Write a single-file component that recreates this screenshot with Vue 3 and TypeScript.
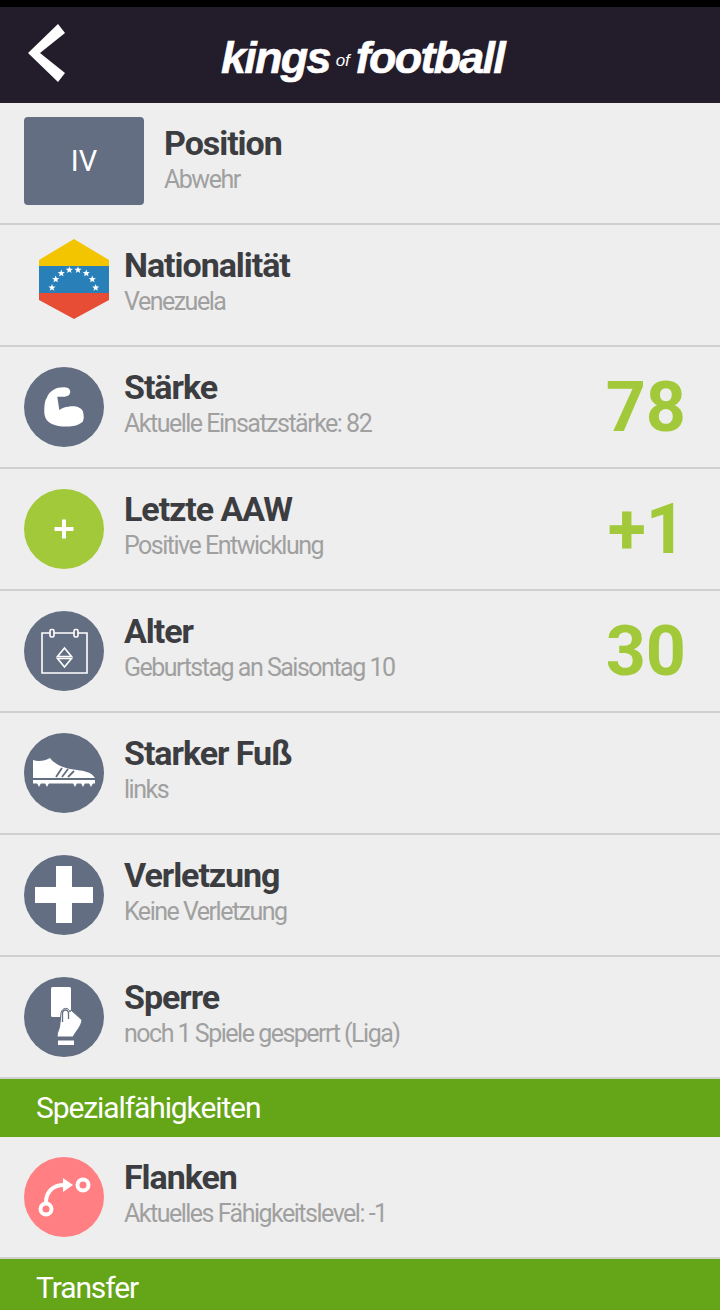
<script setup lang="ts">
type Row = {
  icon: string;
  title: string;
  sub: string;
  value?: string;
};

const rows: Row[] = [
  { icon: 'arm', title: 'Stärke', sub: 'Aktuelle Einsatzstärke: 82', value: '78' },
  { icon: 'plus', title: 'Letzte AAW', sub: 'Positive Entwicklung', value: '+1' },
  { icon: 'calendar', title: 'Alter', sub: 'Geburtstag an Saisontag 10', value: '30' },
  { icon: 'shoe', title: 'Starker Fuß', sub: 'links' },
  { icon: 'cross', title: 'Verletzung', sub: 'Keine Verletzung' },
  { icon: 'card', title: 'Sperre', sub: 'noch 1 Spiele gesperrt (Liga)' },
];

// five pointed star around a center, for the flag arc
function star(cx: number, cy: number, r: number) {
  const pts: string[] = [];
  for (let i = 0; i < 10; i++) {
    const rad = i % 2 === 0 ? r : r * 0.42;
    const a = -Math.PI / 2 + (i * Math.PI) / 5;
    pts.push(`${(cx + rad * Math.cos(a)).toFixed(2)},${(cy + rad * Math.sin(a)).toFixed(2)}`);
  }
  return pts.join(' ');
}

const flagStars = [
  [13, 48.7],
  [16.7, 40.3],
  [22.3, 34.3],
  [30.3, 31],
  [39, 31],
  [47.3, 34.3],
  [53.3, 40.3],
  [56.7, 48.7],
].map(([x, y]) => star(x, y, 3.8));
</script>

<template>
  <div class="page">
    <div class="statusbar"></div>
    <header class="topbar">
      <svg class="back" width="38" height="58" viewBox="0 0 38 58">
        <polygon points="0,29 30,0 37,9 12,29 37,49 30,58" fill="#fff" />
      </svg>
      <div class="logo">
        <span>kings</span>
        <span class="of">of</span>
        <span>football</span>
      </div>
    </header>

    <div class="row">
      <div class="posbox">IV</div>
      <div class="text">
        <div class="title">Position</div>
        <div class="sub">Abwehr</div>
      </div>
    </div>

    <div class="row">
      <svg class="flag" width="70" height="80" viewBox="0 0 70 80">
        <polygon points="35,0 70,21 70,27 0,27 0,21" fill="#f2c500" />
        <rect x="0" y="27" width="70" height="27" fill="#2980b9" />
        <polygon points="0,54 70,54 70,61 35,80 0,61" fill="#e74c35" />
        <polygon v-for="(s, i) in flagStars" :key="i" :points="s" fill="#fff" />
      </svg>
      <div class="text">
        <div class="title">Nationalität</div>
        <div class="sub">Venezuela</div>
      </div>
    </div>

    <div v-for="row in rows" :key="row.title" class="row">
      <svg class="icon" width="80" height="80" viewBox="0 0 80 80">
        <circle cx="40" cy="40" r="40" :fill="row.icon === 'plus' ? '#a2c93a' : '#636e82'" />
        <path
          v-if="row.icon === 'arm'"
          d="M20.3 44.7C20.3 38 21 33 22.7 31C24 27 27 24 30 22.5C34 20 41 19.5 44.3 21.3C47 23 47 27 44 28.7C41 30 37 30 33.3 29.7L35.3 43C38 41 41 39.7 44.3 39.7C48 39 52 39 54.3 40.3C58 42 59.3 44 59.3 46.3C60 50 60 52 58.7 54.7C56 57 53 58.5 49.3 59C44 59.8 39 59.8 34.3 59C29 58 25 56 22.7 53C21 50 20.3 48 20.3 44.7Z"
          fill="#fff"
        />
        <path v-if="row.icon === 'plus'" d="M40 30.5V49.5M30.5 40H49.5" stroke="#fff" stroke-width="4" fill="none" />
        <g v-if="row.icon === 'calendar'" fill="none" stroke="#fff" stroke-width="1.6">
          <path d="M18 22H63V62H18Z" />
          <rect x="26" y="18.5" width="4" height="7.5" rx="1.5" fill="#636e82" />
          <rect x="50" y="18.5" width="4" height="7.5" rx="1.5" fill="#636e82" />
          <path d="M40.5 37L47.5 45.5H33.5ZM33.5 47.5H47.5L40.5 56Z" />
        </g>
        <g v-if="row.icon === 'shoe'" fill="#fff">
          <path d="M9 27C14 29 21 28 26 25C30 31 41 36 53 37C61 38 67 39 71 45H9Z" />
          <rect x="9" y="47" width="62" height="3.5" />
          <path d="M13 50H17L15 54ZM21 50H25L23 54ZM49 50H53L51 54ZM57 50H61L59 54ZM65 50H69L67 54Z" />
          <path d="M32 44L38 35M38 44L44 36M44 44L50 38" stroke="#636e82" stroke-width="1.8" />
        </g>
        <path v-if="row.icon === 'cross'" d="M32 11H48V32H69V48H48V68H32V48H11V32H32Z" fill="#fff" />
        <g v-if="row.icon === 'card'">
          <rect x="27" y="10" width="20" height="30" rx="1.5" fill="#fff" />
          <path
            d="M36 46L37 36C38 30 45 30 46 35L47 33L58 43C57 50 52 54 49 60H33C33 54 36 52 36 46Z"
            fill="#fff"
            stroke="#636e82"
            stroke-width="1"
          />
          <path d="M38.5 45V36C39 32 44 32 44.5 36V42" fill="none" stroke="#636e82" stroke-width="1.3" />
          <rect x="34" y="63.5" width="16" height="4.5" fill="#fff" />
        </g>
      </svg>
      <div class="text">
        <div class="title">{{ row.title }}</div>
        <div class="sub">{{ row.sub }}</div>
      </div>
      <div v-if="row.value" class="value">{{ row.value }}</div>
    </div>

    <div class="section">Spezialfähigkeiten</div>

    <div class="row">
      <svg class="icon" width="80" height="80" viewBox="0 0 80 80">
        <circle cx="40" cy="40" r="40" fill="#ff7f82" />
        <circle cx="22" cy="52" r="5.5" fill="none" stroke="#fff" stroke-width="4" />
        <circle cx="59" cy="28" r="5.5" fill="none" stroke="#fff" stroke-width="4" />
        <path d="M22 45C22 35 29 28 40 28" fill="none" stroke="#fff" stroke-width="4" />
        <polygon points="39,21 49,28 39,35" fill="#fff" />
      </svg>
      <div class="text">
        <div class="title">Flanken</div>
        <div class="sub">Aktuelles Fähigkeitslevel: -1</div>
      </div>
    </div>

    <div class="section">Transfer</div>
  </div>
</template>

<style>
html,
body {
  margin: 0;
  background: #eeeeee;
}
</style>

<style scoped>
.page {
  width: 720px;
  height: 1310px;
  overflow: hidden;
  background: #eeeeee;
  font-family: Roboto, 'Liberation Sans', sans-serif;
}
.statusbar {
  height: 7px;
  background: #000;
}
.topbar {
  position: relative;
  height: 96px;
  background: #231c2a;
  display: flex;
  align-items: center;
  justify-content: center;
}
.back {
  position: absolute;
  left: 28px;
  top: 17px;
}
.logo {
  display: flex;
  align-items: baseline;
  gap: 6px;
  margin-left: 5px;
  padding-top: 6px;
  color: #fff;
  font-family: 'Liberation Sans', Arial, sans-serif;
  font-style: italic;
  font-weight: 700;
  font-size: 45px;
  letter-spacing: -1.8px;
  -webkit-text-stroke: 0.6px #fff;
}
.of {
  font-size: 17px;
  font-weight: 400;
  letter-spacing: 0;
  -webkit-text-stroke: 0;
  transform: translateY(-7px);
}
.row {
  box-sizing: border-box;
  height: 122px;
  padding: 20px 34px 0 24px;
  display: flex;
  align-items: flex-start;
  border-bottom: 2px solid #d0d0d0;
}
.icon {
  flex: none;
  margin-right: 20px;
}
.posbox {
  flex: none;
  width: 120px;
  height: 88px;
  margin-top: -6px;
  margin-right: 20px;
  border-radius: 4px;
  background: #636e82;
  color: #fff;
  font-size: 29px;
  display: flex;
  align-items: center;
  justify-content: center;
}
.flag {
  flex: none;
  margin: -6px 15px 0 15px;
}
.text {
  flex: 1;
}
.title {
  color: #3c3d41;
  font-size: 34px;
  font-weight: 700;
  line-height: 40px;
  letter-spacing: -1.05px;
}
.sub {
  margin-top: 1px;
  color: #a0a0a0;
  font-size: 25px;
  line-height: 32px;
  letter-spacing: -1.5px;
}
.value {
  color: #a2c93a;
  font-size: 70px;
  font-weight: 700;
  line-height: 80px;
}
.section {
  box-sizing: border-box;
  height: 58px;
  padding-left: 36px;
  background: #65a518;
  color: #fff;
  font-size: 30px;
  line-height: 58px;
  letter-spacing: -1.1px;
}
</style>
